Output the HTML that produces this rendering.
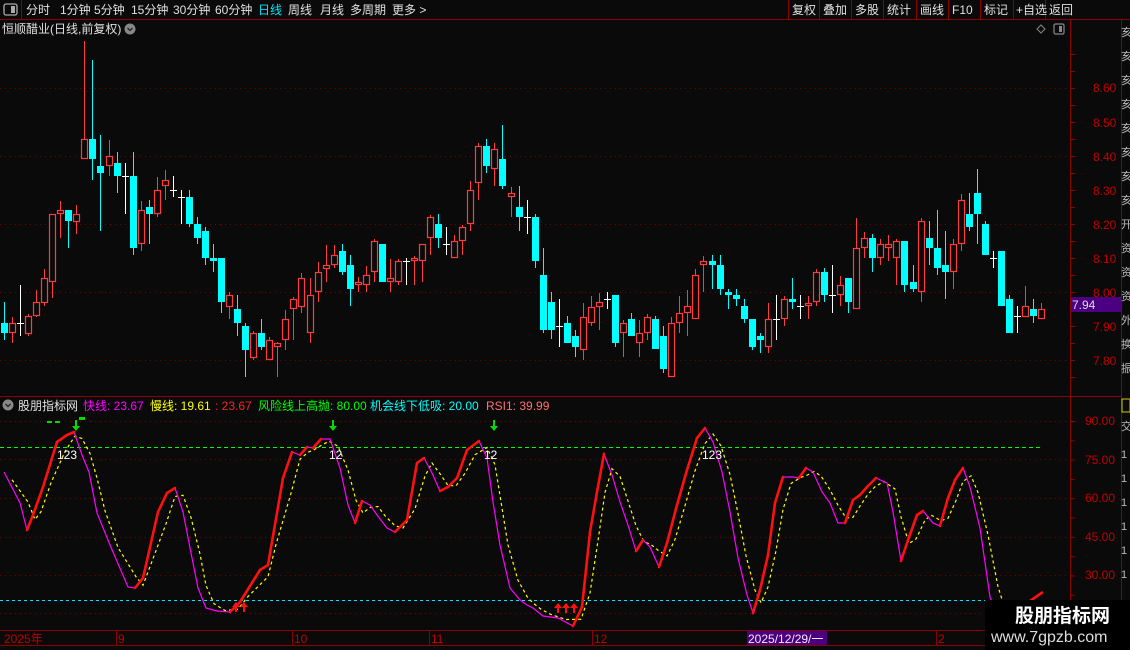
<!DOCTYPE html>
<html><head><meta charset="utf-8">
<style>
html,body{margin:0;padding:0;background:#0a0a0a;width:1130px;height:650px;overflow:hidden;font-family:"Liberation Sans","Noto Sans CJK SC",sans-serif;}
svg{position:absolute;left:0;top:0}
text{font-family:"Liberation Sans","Noto Sans CJK SC",sans-serif;}
</style></head><body>
<svg id="s" width="1130" height="650" xmlns="http://www.w3.org/2000/svg">
<rect width="1130" height="650" fill="#0a0a0a"/>
<line x1="0" y1="19.5" x2="1130" y2="19.5" stroke="#8b0000"/>
<line x1="21.5" y1="0" x2="21.5" y2="19" stroke="#8b0000"/>
<rect x="4" y="4" width="13" height="11" rx="2" fill="none" stroke="#aaa" stroke-width="1.3"/>
<rect x="11" y="6" width="4" height="7" fill="#aaa"/>
<g font-size="12" fill="#e0e0e0">
<text x="26" y="14">分时</text><text x="60" y="14">1分钟</text><text x="94" y="14">5分钟</text>
<text x="131" y="14">15分钟</text><text x="173" y="14">30分钟</text><text x="215" y="14">60分钟</text>
<text x="258" y="14" fill="#00e5ff">日线</text><text x="288" y="14">周线</text><text x="320" y="14">月线</text>
<text x="350" y="14">多周期</text><text x="392" y="14">更多 &gt;</text>
</g>
<g stroke="#8b0000"><line x1="788.5" y1="0" x2="788.5" y2="19"/><line x1="819.5" y1="0" x2="819.5" y2="19"/><line x1="851.5" y1="0" x2="851.5" y2="19"/><line x1="883.5" y1="0" x2="883.5" y2="19"/><line x1="916.5" y1="0" x2="916.5" y2="19"/><line x1="948.5" y1="0" x2="948.5" y2="19"/><line x1="980.5" y1="0" x2="980.5" y2="19"/><line x1="1013.5" y1="0" x2="1013.5" y2="19"/><line x1="1045.5" y1="0" x2="1045.5" y2="19"/></g>
<g font-size="12" fill="#e0e0e0">
<text x="792" y="14">复权</text><text x="823" y="14">叠加</text><text x="855" y="14">多股</text><text x="887" y="14">统计</text><text x="920" y="14">画线</text><text x="952" y="14">F10</text><text x="984" y="14">标记</text><text x="1016" y="14">+自选</text><text x="1049" y="14">返回</text>
</g>
<text x="2" y="33" font-size="12" fill="#e0e0e0">恒顺醋业(日线,前复权)</text>
<circle cx="130" cy="29" r="5.5" fill="#888"/><path d="M127.5 28 L130 30.5 L132.5 28" stroke="#222" fill="none" stroke-width="1.3"/>
<path d="M1041 25 L1045 29 L1041 33 L1037 29 Z" fill="none" stroke="#888"/>
<rect x="1054" y="24" width="10" height="10" rx="1.5" fill="none" stroke="#888" stroke-width="1.2"/><rect x="1059" y="26" width="3" height="6" fill="#888"/>
<line x1="1070.5" y1="19" x2="1070.5" y2="631" stroke="#8b0000"/>
<line x1="1121.5" y1="19" x2="1121.5" y2="650" stroke="#8b0000"/>
<line x1="0" y1="396.5" x2="1121" y2="396.5" stroke="#8b0000"/>
<line x1="0" y1="630.5" x2="1121" y2="630.5" stroke="#8b0000"/>
<line x1="0" y1="645.5" x2="1121" y2="645.5" stroke="#8b0000"/>
<g id="grid"></g>
<g font-size="12" fill="#c00000">
<text x="1093" y="92">8.60</text><text x="1093" y="127">8.50</text><text x="1093" y="161">8.40</text><text x="1093" y="195">8.30</text><text x="1093" y="229">8.20</text><text x="1093" y="263">8.10</text><text x="1093" y="297">8.00</text><text x="1093" y="331">7.90</text><text x="1093" y="365">7.80</text>
<text x="1085" y="425">90.00</text><text x="1085" y="464">75.00</text><text x="1085" y="502">60.00</text><text x="1085" y="541">45.00</text><text x="1085" y="579">30.00</text>
</g>
<rect x="1071" y="297" width="50" height="15" fill="#4b0082"/>
<text x="1072" y="309" font-size="12" fill="#ddd">7.94</text>
<g font-size="11" fill="#bbb">
<text x="1121" y="36">亥</text><text x="1121" y="60">亥</text><text x="1121" y="84">亥</text><text x="1121" y="108">亥</text><text x="1121" y="132">亥</text><text x="1121" y="156">亥</text><text x="1121" y="180">亥</text><text x="1121" y="204">亥</text><text x="1121" y="228">开</text><text x="1121" y="252">资</text><text x="1121" y="276">资</text><text x="1121" y="300">资</text><text x="1121" y="324">外</text><text x="1121" y="348">换</text><text x="1121" y="372">振</text>
<text x="1121" y="430">交</text><text x="1121" y="458">1</text><text x="1121" y="482">1</text><text x="1121" y="506">1</text><text x="1121" y="530">1</text><text x="1121" y="554">1</text><text x="1121" y="578">1</text>
</g>
<rect x="1122" y="399" width="8" height="13" fill="none" stroke="#cc0"/>
<circle cx="8" cy="405" r="5.5" fill="#888"/><path d="M5.5 404 L8 406.5 L10.5 404" stroke="#222" fill="none" stroke-width="1.3"/>
<g font-size="12">
<text x="18" y="410" fill="#e0e0e0">股朋指标网</text>
<text x="83" y="410" fill="#ff00ff">快线: 23.67</text>
<text x="150" y="410" fill="#ffff00">慢线: 19.61</text>
<text x="215" y="410" fill="#ff2020">: 23.67</text>
<text x="258" y="410" fill="#00ff00">风险线上高抛: 80.00</text>
<text x="370" y="410" fill="#00ffff">机会线下低吸: 20.00</text>
<text x="486" y="410" fill="#ff7070">RSI1: 39.99</text>
</g>
<line x1="0" y1="447.5" x2="1040" y2="447.5" stroke="#00ff00" stroke-dasharray="4,3"/>
<line x1="0" y1="600.5" x2="1040" y2="600.5" stroke="#00e5ff" stroke-dasharray="3,3"/>
<g id="candles"></g>
<g id="ind"></g>
<g fill="#00dd00">
<rect x="47" y="421" width="5" height="2"/><rect x="55" y="421" width="5" height="2"/><rect x="79" y="417" width="6" height="3"/>
<path d="M75 420 h2 v6 h3 l-4 5 l-4 -5 h3z"/><path d="M332 420 h2 v6 h3 l-4 5 l-4 -5 h3z"/><path d="M493 420 h2 v6 h3 l-4 5 l-4 -5 h3z"/>
</g>
<g fill="#ff1010">
<path d="M235 612 v-5 h-3 l4 -5 l4 5 h-3 v5z"/><path d="M243 612 v-5 h-3 l4 -5 l4 5 h-3 v5z"/>
<path d="M557 613 v-5 h-3 l4 -5 l4 5 h-3 v5z"/><path d="M565 613 v-5 h-3 l4 -5 l4 5 h-3 v5z"/><path d="M573 613 v-5 h-3 l4 -5 l4 5 h-3 v5z"/>
</g>
<g font-size="12" fill="#fff">
<text x="57" y="459">123</text><text x="329" y="459">12</text><text x="484" y="459">12</text><text x="702" y="459">123</text>
</g>
<g font-size="12" fill="#c00000">
<text x="4" y="643">2025年</text><text x="118" y="643">9</text><text x="294" y="643">10</text><text x="431" y="643">11</text><text x="594" y="643">12</text><text x="938" y="643">2</text>
</g>
<g stroke="#8b0000"><line x1="116.5" y1="631" x2="116.5" y2="645"/><line x1="292.5" y1="631" x2="292.5" y2="645"/><line x1="429.5" y1="631" x2="429.5" y2="645"/><line x1="592.5" y1="631" x2="592.5" y2="645"/><line x1="936.5" y1="631" x2="936.5" y2="645"/></g>
<rect x="747" y="631" width="80" height="14" fill="#4b0082"/>
<text x="748" y="643" font-size="12" fill="#eee">2025/12/29/一</text>
<rect x="985" y="600" width="145" height="50" fill="#000"/>
<text x="1015" y="622" font-size="19" font-weight="bold" fill="#fff">股朋指标网</text>
<text x="991" y="642" font-size="16" fill="#ddd">www.7gpzb.com</text>
</svg>
<script>
var NS="http://www.w3.org/2000/svg";
function el(p,t,a){var e=document.createElementNS(NS,t);for(var k in a)e.setAttribute(k,a[k]);p.appendChild(e);return e;}
var grid=document.getElementById('grid');
[88,156,224,292,360].forEach(function(y){el(grid,'line',{x1:0,y1:y+.5,x2:1070,y2:y+.5,stroke:'#7a0000','stroke-dasharray':'1,4'});});
[421,459,498,537,575,613].forEach(function(y){el(grid,'line',{x1:0,y1:y+.5,x2:1070,y2:y+.5,stroke:'#7a0000','stroke-dasharray':'1,4'});});
for(var y=54;y<390;y+=17){el(grid,'line',{x1:1070,y1:y+.5,x2:1075,y2:y+.5,stroke:'#8b0000'});}
for(var y=421;y<630;y+=19.3){el(grid,'line',{x1:1070,y1:y+.5,x2:1075,y2:y+.5,stroke:'#8b0000'});}
var C=[[323,333,302,340,'c'],[323,333,317,343,'r'],[323,323,285,336,'w'],[316,334,314,336,'r'],[302,316,290,317,'r'],[278,303,269,306,'r'],[214,282,214,298,'r'],[210,214,201,238,'r'],[210,221,210,248,'c'],[214,222,205,234,'r'],
[139,159,41,159,'r'],[139,159,60,180,'c'],[166,173,135,231,'c'],[156,166,140,176,'r'],[163,176,152,193,'c'],[176,176,163,214,'w'],[176,248,152,255,'c'],[210,244,201,251,'r'],[207,214,200,244,'c'],[190,214,177,217,'r'],
[180,186,170,200,'r'],[190,190,176,197,'w'],[197,197,190,224,'w'],[197,224,190,227,'c'],[224,238,217,244,'c'],[231,258,227,265,'c'],[258,261,244,272,'c'],[258,302,258,313,'c'],[295,307,292,319,'r'],[309,323,295,336,'c'],
[326,350,323,377,'c'],[333,358,331,360,'r'],[333,347,319,350,'c'],[340,360,337,360,'r'],[343,347,342,377,'r'],[319,340,310,350,'r'],[299,309,297,340,'r'],[278,307,273,313,'r'],[295,333,278,343,'r'],[272,292,262,302,'r'],
[265,269,245,282,'r'],[255,265,245,268,'r'],[251,272,244,275,'c'],[265,289,255,306,'c'],[282,285,277,292,'r'],[275,285,266,292,'r'],[241,272,239,282,'r'],[244,282,244,282,'c'],[278,282,259,292,'r'],[261,282,259,285,'r'],
[261,261,258,285,'w'],[258,261,256,285,'r'],[244,261,244,282,'r'],[217,238,215,255,'r'],[224,238,214,248,'c'],[244,244,227,255,'w'],[241,258,235,258,'r'],[227,241,225,255,'r'],[190,224,181,231,'r'],[146,183,143,200,'r'],
[146,166,139,173,'c'],[149,169,143,186,'r'],[159,186,125,189,'c'],[193,197,187,217,'r'],[207,217,186,231,'c'],[217,217,200,234,'w'],[217,261,214,268,'c'],[275,330,248,333,'c'],[302,330,292,339,'c'],[326,326,299,347,'w'],
[323,343,316,343,'c'],[336,347,330,357,'c'],[317,350,303,360,'r'],[307,323,296,326,'r'],[302,307,293,330,'r'],[299,299,292,309,'w'],[295,343,295,347,'c'],[323,333,320,357,'r'],[319,336,313,336,'c'],[333,343,320,357,'r'],
[317,333,314,340,'r'],[319,349,316,349,'c'],[336,369,326,373,'c'],[323,377,317,377,'r'],[313,323,296,333,'r'],[306,313,290,336,'r'],[275,319,269,319,'r'],[261,265,256,292,'r'],[261,265,255,289,'c'],[265,289,255,295,'c'],
[292,295,289,309,'c'],[295,299,289,306,'c'],[306,319,299,323,'c'],[319,347,319,350,'c'],[336,340,333,353,'c'],[319,347,303,353,'r'],[319,319,295,340,'w'],[299,319,296,326,'r'],[299,302,278,309,'c'],[306,306,295,319,'w'],
[303,306,296,319,'r'],[272,302,269,306,'r'],[272,295,268,302,'c'],[295,295,265,313,'w'],[285,295,276,306,'r'],[278,302,278,313,'c'],[248,309,218,309,'r'],[238,248,232,258,'r'],[238,258,234,272,'c'],[244,258,239,265,'r'],
[244,248,235,261,'r'],[241,258,239,285,'r'],[241,285,241,292,'c'],[282,289,265,292,'c'],[221,292,218,302,'r'],[238,248,221,265,'c'],[248,268,210,275,'c'],[265,272,231,299,'c'],[244,272,239,289,'r'],[200,244,194,251,'r'],
[214,227,193,231,'c'],[193,214,169,244,'c'],[224,255,221,255,'c'],[258,258,251,268,'w'],[251,306,251,306,'c'],[299,333,295,333,'c'],[316,316,306,333,'w'],[306,317,286,317,'r'],[309,316,299,323,'c'],[309,319,303,319,'r']];
var cg=document.getElementById('candles');
C.forEach(function(c,i){
 var x=Math.round(4+i*8.04);
 var col=c[4]=='c'?'#00ffff':(c[4]=='r'?'#ff3c3c':'#ffffff');
 el(cg,'line',{x1:x+.5,y1:c[2],x2:x+.5,y2:c[3],stroke:col,'stroke-width':1});
 if(c[4]=='w'){el(cg,'line',{x1:x-3,y1:c[0]+.5,x2:x+4,y2:c[0]+.5,stroke:col});}
 else if(c[4]=='c'){el(cg,'rect',{x:x-3,y:c[0],width:7,height:Math.max(2,c[1]-c[0]),fill:col});}
 else{el(cg,'rect',{x:x-2.5,y:c[0]+.5,width:6,height:Math.max(2,c[1]-c[0]-1),fill:'#0a0a0a',stroke:col,'stroke-width':1.2});}
});
var F=[[4,472],[20,503],[27,530],[33,515],[43,487],[57,442],[67,435],[74,432],[82,455],[89,472],[97,513],[110,545],[128,587],[135,588],[143,578],[158,512],[167,493],[175,488],[183,512],[192,558],[198,588],[206,608],[217,611],[230,612],[240,602],[260,570],[268,565],[283,478],[292,452],[300,455],[307,447],[313,448],[321,439],[330,439],[340,468],[348,505],[355,523],[362,501],[370,505],[377,515],[387,528],[395,532],[407,520],[417,463],[424,458],[432,473],[440,491],[448,487],[457,478],[467,450],[479,441],[487,458],[493,502],[500,545],[510,588],[520,600],[527,605],[533,608],[543,616],[558,618],[573,626],[582,607],[590,532],[597,492],[604,454],[612,475],[620,502],[628,525],[636,551],[643,540],[650,547],[659,567],[667,543],[677,505],[687,470],[697,438],[705,428],[713,442],[722,472],[730,512],[738,558],[747,595],[753,613],[760,590],[768,555],[775,503],[783,477],[793,477],[799,478],[806,468],[813,472],[822,492],[830,503],[838,523],[845,523],[853,500],[860,495],[867,487],[876,478],[887,483],[893,512],[901,561],[908,540],[917,515],[923,511],[933,523],[940,526],[948,498],[955,480],[963,468],[970,487],[980,528],[990,597],[1000,625]];
var ig=document.getElementById('ind');
var S=[];for(var i=0;i<F.length;i++){var a=F[Math.max(0,i-1)][1],b=F[i][1],c2=F[Math.min(F.length-1,i+1)][1];S.push([F[i][0]+8,(a+2*b+c2)/4]);}
el(ig,'polyline',{points:S.map(function(p){return p.join(',')}).join(' '),fill:'none',stroke:'#ffff00','stroke-width':1.2,'stroke-dasharray':'3,3'});
el(ig,'polyline',{points:F.map(function(p){return p.join(',')}).join(' '),fill:'none',stroke:'#ff00ff','stroke-width':1.2});
for(var i=0;i<F.length-1;i++){if(F[i+1][1]<F[i][1]-1){el(ig,'line',{x1:F[i][0],y1:F[i][1],x2:F[i+1][0],y2:F[i+1][1],stroke:'#ff1010','stroke-width':2.6,'stroke-linecap':'round'});}}
el(ig,'line',{x1:1030,y1:601,x2:1043,y2:592,stroke:'#ff1010','stroke-width':2.6});
</script>
</body></html>
